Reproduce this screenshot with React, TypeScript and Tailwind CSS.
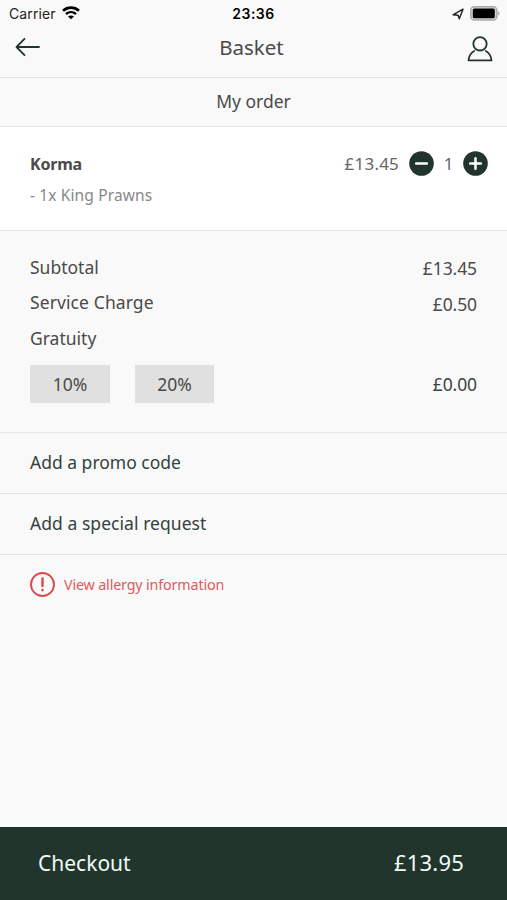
import React, { useState } from 'react';

interface PriceRowProps {
  label: string;
  labelClass: string;
  price?: string;
}

const PriceRow: React.FC<PriceRowProps> = ({ label, labelClass, price }) => (
  <div className="flex h-[35.5px] items-center justify-between">
    <span className={labelClass}>{label}</span>
    {price && <span className="pt-[3px] text-[17.5px] tracking-[-0.1px]">{price}</span>}
  </div>
);

const StatusBar = () => (
  <div className="grid h-7 grid-cols-3 items-center pl-[9px] pr-[7px] font-['Inter',sans-serif] text-black">
    <div className="flex items-center gap-[6px]">
      <span className="text-[14px] leading-none tracking-[0.1px] text-[#222]">Carrier</span>
      <svg width="18" height="14" viewBox="0 0 18 14" fill="none" stroke="currentColor" className="-mt-[2px]">
        <path d="M1 4.7C5.6 .6 12.4 .6 17 4.7" strokeWidth="2.7" />
        <path d="M4 8C6.9 5.5 11.1 5.5 14 8" strokeWidth="2.4" />
        <path d="M9 13.3 6 10.5C7.7 9.1 10.3 9.1 12 10.5Z" fill="currentColor" stroke="none" />
      </svg>
    </div>
    <span className="pr-[2px] text-center text-[14px] font-semibold leading-none tracking-[0.5px]">23:36</span>
    <div className="flex items-center justify-end gap-[6px]">
      <svg width="12" height="12" viewBox="0 0 12 12" fill="none" stroke="#222" strokeWidth="1.4" strokeLinejoin="round" className="-mt-[1px]">
        <path d="M11 1.2 7.3 10.8 6.1 7.2 1 6.8Z" />
      </svg>
      <svg width="30" height="15" viewBox="0 0 30 15" className="-mt-[1px]">
        <rect x=".8" y=".8" width="26" height="13.2" rx="3.6" fill="#d8d8d8" stroke="#aaa" strokeWidth="1.5" />
        <rect x="2.8" y="2.5" width="22" height="9.8" rx="1.6" fill="#000" />
        <path d="M28 5.2C30 6 30 8.8 28 9.6Z" fill="#aaa" />
      </svg>
    </div>
  </div>
);

const App: React.FC = () => {
  const [quantity, setQuantity] = useState(1);

  return (
    <div className="flex h-[900px] w-[507px] flex-col overflow-hidden bg-[#f9f9f9] font-['Noto_Sans',sans-serif] leading-none text-[#4a4a4a]">
      <header className="h-[78px] border-b border-[#e3e3e3]">
        <StatusBar />
        <div className="grid h-10 grid-cols-3 items-center pl-[15px] pr-[14px]">
          <button aria-label="Back">
            <svg width="25" height="20" viewBox="0 0 25 20" fill="none" stroke="#21352d" strokeWidth="1.8" strokeLinecap="round" strokeLinejoin="round" className="-mt-[3px]">
              <path d="M24 10H1.5M9.5 1.8 1.5 10l8 8.2" />
            </svg>
          </button>
          <h1 className="pb-[2px] pr-[5px] text-center text-[20.5px]">Basket</h1>
          <button aria-label="Account" className="flex justify-end">
            <svg width="26" height="26" viewBox="0 0 26 26" fill="none" stroke="#21352d" strokeWidth="1.8" strokeLinecap="round" strokeLinejoin="round" className="mt-[2px]">
              <circle cx="13" cy="7.8" r="6.7" />
              <path d="M7.2 15C3.8 16.8 2 20 1.5 24.4H24.5C24 20 22.2 16.8 18.8 15" />
            </svg>
          </button>
        </div>
      </header>

      <div className="flex h-[49px] items-center justify-center border-b border-[#e6e6e6]">
        <h2 className="text-[17.5px]">My order</h2>
      </div>

      {/* Basket item */}
      <section className="h-[103.5px] border-b border-[#e6e6e6] bg-white pl-[30px] pr-[19px] pt-[21px]">
        <div className="flex h-[31px] items-center justify-between">
          <span className="text-[16px] font-bold tracking-[-0.2px]">Korma</span>
          <div className="flex items-center text-[17px] text-[#666]">
            <span className="tracking-[0.2px]">£13.45</span>
            <button
              aria-label="Remove one"
              className="ml-[10px]"
              onClick={() => setQuantity(Math.max(0, quantity - 1))}
            >
              <svg width="25" height="25" viewBox="0 0 25 25">
                <circle cx="12.5" cy="12.5" r="12.3" fill="#21352d" />
                <path d="M7.2 12.5H17.8" stroke="#fff" strokeWidth="2.5" strokeLinecap="round" />
              </svg>
            </button>
            <span className="w-[29px] text-center">{quantity}</span>
            <button aria-label="Add one" onClick={() => setQuantity(quantity + 1)}>
              <svg width="25" height="25" viewBox="0 0 25 25">
                <circle cx="12.5" cy="12.5" r="12.3" fill="#21352d" />
                <path d="M7.2 12.5H17.8M12.5 7.2V17.8" stroke="#fff" strokeWidth="2.5" strokeLinecap="round" />
              </svg>
            </button>
          </div>
        </div>
        <p className="mt-[9px] text-[15.5px] tracking-[0.13px] text-[#888]">- 1x King Prawns</p>
      </section>

      {/* Totals */}
      <section className="h-[202px] border-b border-[#e6e6e6] px-[30px] pt-[19px]">
        <PriceRow label="Subtotal" labelClass="text-[17.5px]" price="£13.45" />
        <PriceRow label="Service Charge" labelClass="text-[17.5px] tracking-[0.1px]" price="£0.50" />
        <PriceRow label="Gratuity" labelClass="text-[17.5px]" />
        <div className="mt-[9px] flex items-center">
          <button className="h-[38px] w-20 bg-[#e0e0e0] pt-[2px] text-[17.5px]">10%</button>
          <button className="ml-[25px] h-[38px] w-[79px] bg-[#e0e0e0] pt-[2px] text-[17.5px]">20%</button>
          <span className="ml-auto pt-[2px] text-[17.5px] tracking-[-0.1px] text-[#3c4441]">£0.00</span>
        </div>
      </section>

      <button className="h-[61px] border-b border-[#e3e3e3] pl-[30px] text-left text-[17.5px] text-[#34423d]">
        Add a promo code
      </button>
      <button className="h-[61px] border-b border-[#e3e3e3] pl-[30px] text-left text-[17.5px] tracking-[0.05px] text-[#34423d]">
        Add a special request
      </button>

      <button className="flex h-[60px] items-center gap-[9px] pl-[30px] text-[#e05a5d]">
        <svg width="25" height="25" viewBox="0 0 25 25" fill="none" stroke="#d94a4f" strokeLinecap="round">
          <circle cx="12.5" cy="12.5" r="11.5" strokeWidth="1.9" />
          <path d="M12.5 6.5V14" strokeWidth="2.4" />
          <path d="M12.5 18V18.1" strokeWidth="2.6" />
        </svg>
        <span className="pt-[2px] text-[14.3px] tracking-[-0.15px]">View allergy information</span>
      </button>

      <button className="mt-auto flex h-[73.5px] items-center justify-between bg-[#21352d] pl-[38px] pr-[43px] text-[21px] text-[#f1fbf6]">
        <span>Checkout</span>
        <span className="pb-[2px] text-[22px] tracking-[0.2px]">£13.95</span>
      </button>
    </div>
  );
};

export default App;
